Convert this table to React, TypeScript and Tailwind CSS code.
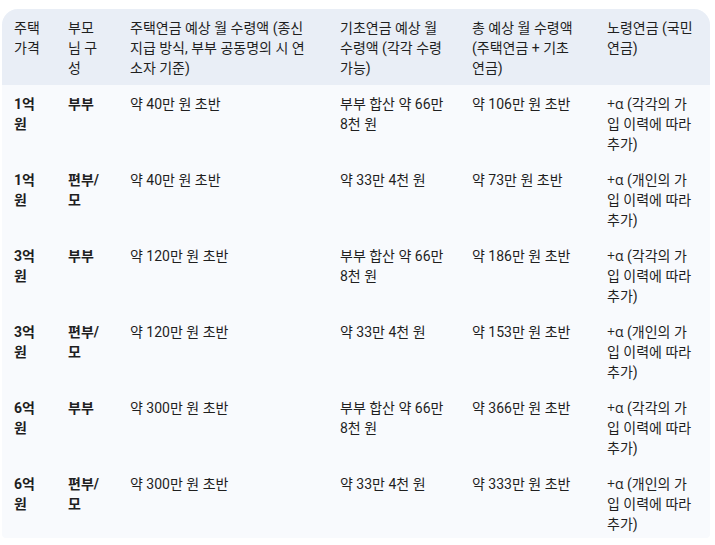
const rows = [
  { price: "1억 원", who: "부부", home: "약 40만 원 초반", basic: "부부 합산 약 66만 8천 원", total: "약 106만 원 초반", old: "(각각의 가입 이력에 따라 추가)" },
  { price: "1억 원", who: "편부/모", home: "약 40만 원 초반", basic: "약 33만 4천 원", total: "약 73만 원 초반", old: "(개인의 가입 이력에 따라 추가)" },
  { price: "3억 원", who: "부부", home: "약 120만 원 초반", basic: "부부 합산 약 66만 8천 원", total: "약 186만 원 초반", old: "(각각의 가입 이력에 따라 추가)" },
  { price: "3억 원", who: "편부/모", home: "약 120만 원 초반", basic: "약 33만 4천 원", total: "약 153만 원 초반", old: "(개인의 가입 이력에 따라 추가)" },
  { price: "6억 원", who: "부부", home: "약 300만 원 초반", basic: "부부 합산 약 66만 8천 원", total: "약 366만 원 초반", old: "(각각의 가입 이력에 따라 추가)" },
  { price: "6억 원", who: "편부/모", home: "약 300만 원 초반", basic: "약 33만 4천 원", total: "약 333만 원 초반", old: "(개인의 가입 이력에 따라 추가)" },
]

const headers = [
  "주택 가격",
  "부모님 구성",
  "주택연금 예상 월 수령액 (종신 지급 방식, 부부 공동명의 시 연소자 기준)",
  "기초연금 예상 월 수령액 (각각 수령 가능)",
  "총 예상 월 수령액 (주택연금 + 기초연금)",
  "노령연금 (국민연금)",
]

const cell = "px-3 pt-[9px] pb-[7px] align-top group-last:pb-[4px]"

export default function App() {
  return (
    <div
      className="min-h-screen bg-white pl-[2px] pt-[9px] text-[14px] leading-5 text-[#1f1f1f]"
      style={{ fontFamily: 'Roboto, "Noto Sans", "Noto Sans CJK KR", sans-serif' }}
    >
      <table className="w-[708px] table-fixed border-collapse overflow-hidden rounded-t-2xl rounded-b-[4px] bg-[#f8fafd]">
        <colgroup>
          <col className="w-[54px]" />
          <col className="w-[62px]" />
          <col className="w-[210px]" />
          <col className="w-[132px]" />
          <col className="w-[135px]" />
          <col className="w-[115px]" />
        </colgroup>
        <thead className="bg-[#e9eef6]">
          <tr>
            {headers.map((h, i) => (
              <th
                key={h}
                className={
                  // the total column wraps a little earlier in the original
                  i === 4
                    ? "pl-3 pr-[18px] pt-[9px] pb-[7px] text-left align-top font-normal"
                    : "px-3 pt-[9px] pb-[7px] text-left align-top font-normal"
                }
              >
                {h}
              </th>
            ))}
          </tr>
        </thead>
        <tbody>
          {rows.map((r, i) => (
            <tr key={i} className="group">
              <td className={`${cell} font-bold`}>{r.price}</td>
              <td className={`${cell} font-bold`}>{r.who}</td>
              <td className={cell}>{r.home}</td>
              <td className={cell}>{r.basic}</td>
              <td className={cell}>{r.total}</td>
              <td className={cell}>
                <span className="font-['Open_Sans']">+α</span> {r.old}
              </td>
            </tr>
          ))}
        </tbody>
      </table>
    </div>
  )
}
